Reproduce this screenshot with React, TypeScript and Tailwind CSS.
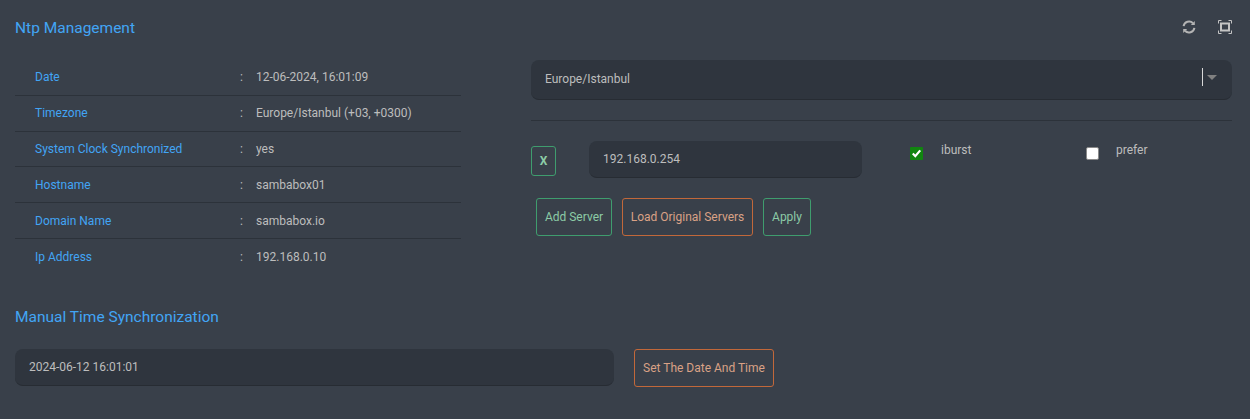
const rows = [
    ['Date', '12-06-2024, 16:01:09'],
    ['Timezone', 'Europe/Istanbul (+03, +0300)'],
    ['System Clock Synchronized', 'yes'],
    ['Hostname', 'sambabox01'],
    ['Domain Name', 'sambabox.io'],
    ['Ip Address', '192.168.0.10'],
];

const greenBtn = 'rounded-[3px] border border-[#3f9d6e] text-xs text-[#8ccba6]';
const orangeBtn = 'rounded-[3px] border border-[#c2683a] text-xs text-[#daa286]';

export default function App() {
    return (
        <div className="h-[419px] w-[1250px] overflow-hidden bg-[#39404a] font-['Roboto',sans-serif] text-xs text-[#bdbdbd]">
            <div className="flex h-[60px] items-start justify-between pt-[18px] pr-[18px] pl-[15px]">
                <h2 className="text-[15.5px] leading-[20px] text-[#42a5f5]">Ntp Management</h2>
                <div className="flex items-center gap-[22px] pt-[2px]">
                    <svg width="14" height="14" viewBox="0 0 14 14" fill="none" stroke="#b4b4b4" strokeWidth="2">
                        <path d="M1.6 6.2A5.5 5.5 0 0 1 11 3.2" />
                        <path d="M12.4 7.8A5.5 5.5 0 0 1 3 10.8" />
                        <path d="M12.8 1V5H8.8" fill="#b4b4b4" stroke="none" />
                        <path d="M1.2 13V9H5.2" fill="#b4b4b4" stroke="none" />
                    </svg>
                    <svg width="14" height="14" viewBox="0 0 14 14" fill="none" stroke="#c4c4c4">
                        <path d="M0.5 3.5V0.5H3.5M10.5 0.5H13.5V3.5M13.5 10.5V13.5H10.5M3.5 13.5H0.5V10.5" />
                        <rect x="3" y="3.5" width="8" height="7" strokeWidth="2" />
                    </svg>
                </div>
            </div>

            <div className="flex h-[247px] pl-[15px]">
                <div className="w-[446px]">
                    {rows.map(([label, value], i) => (
                        <div
                            key={label}
                            className={`flex h-[35.8px] items-center ${i < rows.length - 1 ? 'border-b border-[#2c323a]' : ''}`}
                        >
                            <span className="w-[225px] pl-[20px] text-[#42a5f5]">{label}</span>
                            <span className="w-[16px]">:</span>
                            <span>{value}</span>
                        </div>
                    ))}
                </div>

                <div className="ml-[70px] w-[701px]">
                    <div className="flex h-[40px] items-center justify-between rounded-lg border-b border-[#272c33] bg-[#2f353e] pr-[15px] pb-[2px] pl-[14px]">
                        <span>Europe/Istanbul</span>
                        <div className="flex items-center gap-[4px] pb-[3px]">
                            <span className="h-[18px] w-px bg-[#d8d8d8]" />
                            <span className="h-0 w-0 border-x-[5px] border-t-[5px] border-x-transparent border-t-[#808080]" />
                        </div>
                    </div>
                    <div className="mt-[20px] border-t border-[#2c323a]" />

                    <div className="mt-[20px] flex items-start">
                        <button className={`mt-[5px] h-[30px] w-[25px] font-bold ${greenBtn}`}>X</button>
                        <div className="ml-[33px] flex h-[37px] w-[273px] items-center rounded-lg border-b border-[#272c33] bg-[#2f353e] pl-[14px]">
                            192.168.0.254
                        </div>
                        <div className="mt-[4px] ml-[48px] flex w-[176px] items-center">
                            <span className="flex h-[13px] w-[13px] items-center justify-center rounded-[1px] bg-[#11850f]">
                                <svg width="11" height="11" viewBox="0 0 11 11" fill="none" stroke="#ffffff" strokeWidth="2.2">
                                    <path d="M1.8 5.6L4.3 8.2L9.2 2.4" />
                                </svg>
                            </span>
                            <span className="ml-[18px] -translate-y-[3px]">iburst</span>
                        </div>
                        <div className="mt-[4px] flex items-center">
                            <span className="h-[13px] w-[13px] rounded-[2px] border border-[#8a8a8a] bg-white" />
                            <span className="ml-[17px] -translate-y-[3px]">prefer</span>
                        </div>
                    </div>

                    <div className="mt-[20px] ml-[5px] flex gap-[10px]">
                        <button className={`h-[38px] w-[76px] ${greenBtn}`}>Add Server</button>
                        <button className={`h-[38px] w-[131px] ${orangeBtn}`}>Load Original Servers</button>
                        <button className={`h-[38px] w-[48px] ${greenBtn}`}>Apply</button>
                    </div>
                </div>
            </div>

            <div className="pl-[15px]">
                <h2 className="text-[15.5px] leading-[20px] text-[#42a5f5]">Manual Time Synchronization</h2>
                <div className="mt-[22px] flex items-start gap-[20px]">
                    <div className="flex h-[37px] w-[599px] items-center rounded-lg border-b border-[#272c33] bg-[#2f353e] pl-[14px]">
                        2024-06-12 16:01:01
                    </div>
                    <button className={`h-[38px] w-[140px] ${orangeBtn}`}>Set The Date And Time</button>
                </div>
            </div>
        </div>
    );
}
